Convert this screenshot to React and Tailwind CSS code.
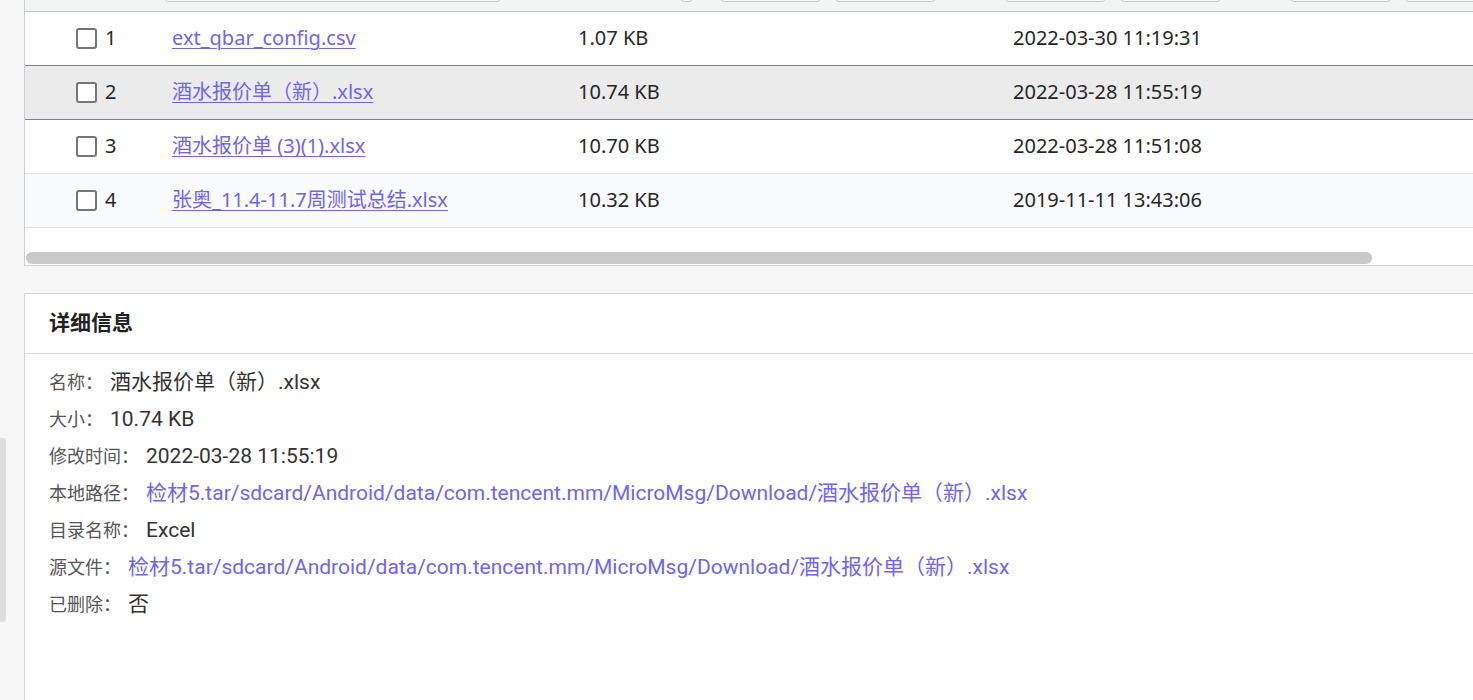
import React from 'react';

const files = [
  { id: 1, name: 'ext_qbar_config.csv', size: '1.07 KB', time: '2022-03-30 11:19:31' },
  { id: 2, name: '酒水报价单（新）.xlsx', size: '10.74 KB', time: '2022-03-28 11:55:19', selected: true },
  { id: 3, name: '酒水报价单 (3)(1).xlsx', size: '10.70 KB', time: '2022-03-28 11:51:08' },
  { id: 4, name: '张奥_11.4-11.7周测试总结.xlsx', size: '10.32 KB', time: '2019-11-11 13:43:06', striped: true },
];

const path = '检材5.tar/sdcard/Android/data/com.tencent.mm/MicroMsg/Download/酒水报价单（新）.xlsx';

const details = [
  { label: '名称：', value: '酒水报价单（新）.xlsx' },
  { label: '大小：', value: '10.74 KB' },
  { label: '修改时间：', value: '2022-03-28 11:55:19' },
  { label: '本地路径：', value: path, link: true },
  { label: '目录名称：', value: 'Excel' },
  { label: '源文件：', value: path, link: true },
  { label: '已删除：', value: '否' },
];

function FilterStrip() {
  // only the bottom edge of the filter inputs is visible (page is scrolled)
  const box = 'h-[24px] border border-[#c9c9c9] rounded-[4px] bg-[#f7f8f8] shrink-0';
  return (
    <div className="h-[12px] overflow-hidden flex items-end pb-[9px] bg-[#f3f5f4] border-b border-[#c6c6c6]">
      <div className="w-[139px] shrink-0" />
      <div className={`${box} w-[337px]`} />
      <div className={`${box} w-[13px] ml-[179px]`} />
      <div className={`${box} w-[101px] ml-[27px]`} />
      <div className={`${box} w-[101px] ml-[14px]`} />
      <div className={`${box} w-[101px] ml-[69px]`} />
      <div className={`${box} w-[101px] ml-[14px]`} />
      <div className={`${box} w-[101px] ml-[69px]`} />
      <div className={`${box} w-[101px] ml-[14px]`} />
    </div>
  );
}

function Row({ f, beforeSelected }) {
  let bg = 'bg-white';
  if (f.selected) bg = 'bg-[#ebebeb]';
  else if (f.striped) bg = 'bg-[#fafbfe]';
  const line = f.selected || beforeSelected ? 'bg-[#7a70f4]' : 'bg-[#e2e2e2]';
  return (
    <div className={`h-[54px] flex flex-col text-[20px] text-[#262626] ${bg}`}>
      <div className="flex-1 flex items-center pb-[1px]">
        <div className="w-[147px] shrink-0 flex items-center pl-[51px]">
          <span className="w-[21px] h-[21px] border-2 border-[#767676] rounded-[3px] bg-white" />
          <span className="ml-[8px]">{f.id}</span>
        </div>
        <div className="w-[406px] shrink-0">
          <a className="text-[#7064f0] underline underline-offset-[3px] decoration-1 whitespace-nowrap">{f.name}</a>
        </div>
        <div className="w-[435px] shrink-0">{f.size}</div>
        <div className="flex-1">{f.time}</div>
      </div>
      <div className={`h-px ${line}`} />
    </div>
  );
}

export default function App() {
  return (
    <div
      className="w-[1473px] h-[700px] overflow-hidden flex bg-[#f7f7f7]"
      style={{ fontFamily: '"Noto Sans", "Noto Sans CJK SC", sans-serif' }}
    >
      {/* left gutter with the sidebar scrollbar */}
      <div className="w-[24px] shrink-0">
        <div className="mt-[438px] w-[6px] h-[184px] bg-[#dedede] rounded-r-[3px]" />
      </div>

      <div className="flex-1 flex flex-col min-w-0">
        {/* file table */}
        <div className="bg-white border-l border-b border-[#cfcfcf]">
          <FilterStrip />
          {files.map((f, i) => (
            <Row key={f.id} f={f} beforeSelected={files[i + 1]?.selected} />
          ))}
          <div className="h-[24px]" />
          <div className="h-[12px] w-[1346px] ml-px rounded-full bg-[#c9c9c9]" />
          <div className="h-px" />
        </div>

        {/* details */}
        <div
          className="mt-[27px] flex-1 bg-white border-l border-t border-[#d6d6d6]"
          style={{ fontFamily: 'Roboto, "Noto Sans CJK SC", sans-serif' }}
        >
          <div className="h-[60px] flex items-center px-[24px] border-b border-[#dcdcdc]">
            <h2 className="text-[21px] font-bold text-[#222]">详细信息</h2>
          </div>
          <div className="pt-[10px] px-[24px]">
            {details.map((d) => (
              <div key={d.label} className="h-[37px] flex items-center whitespace-nowrap">
                <span className="text-[18px] text-[#555]">{d.label}</span>
                <span className={`ml-[7px] text-[21px] ${d.link ? 'text-[#7064f0]' : 'text-[#333]'}`}>
                  {d.value}
                </span>
              </div>
            ))}
          </div>
        </div>
      </div>
    </div>
  );
}
